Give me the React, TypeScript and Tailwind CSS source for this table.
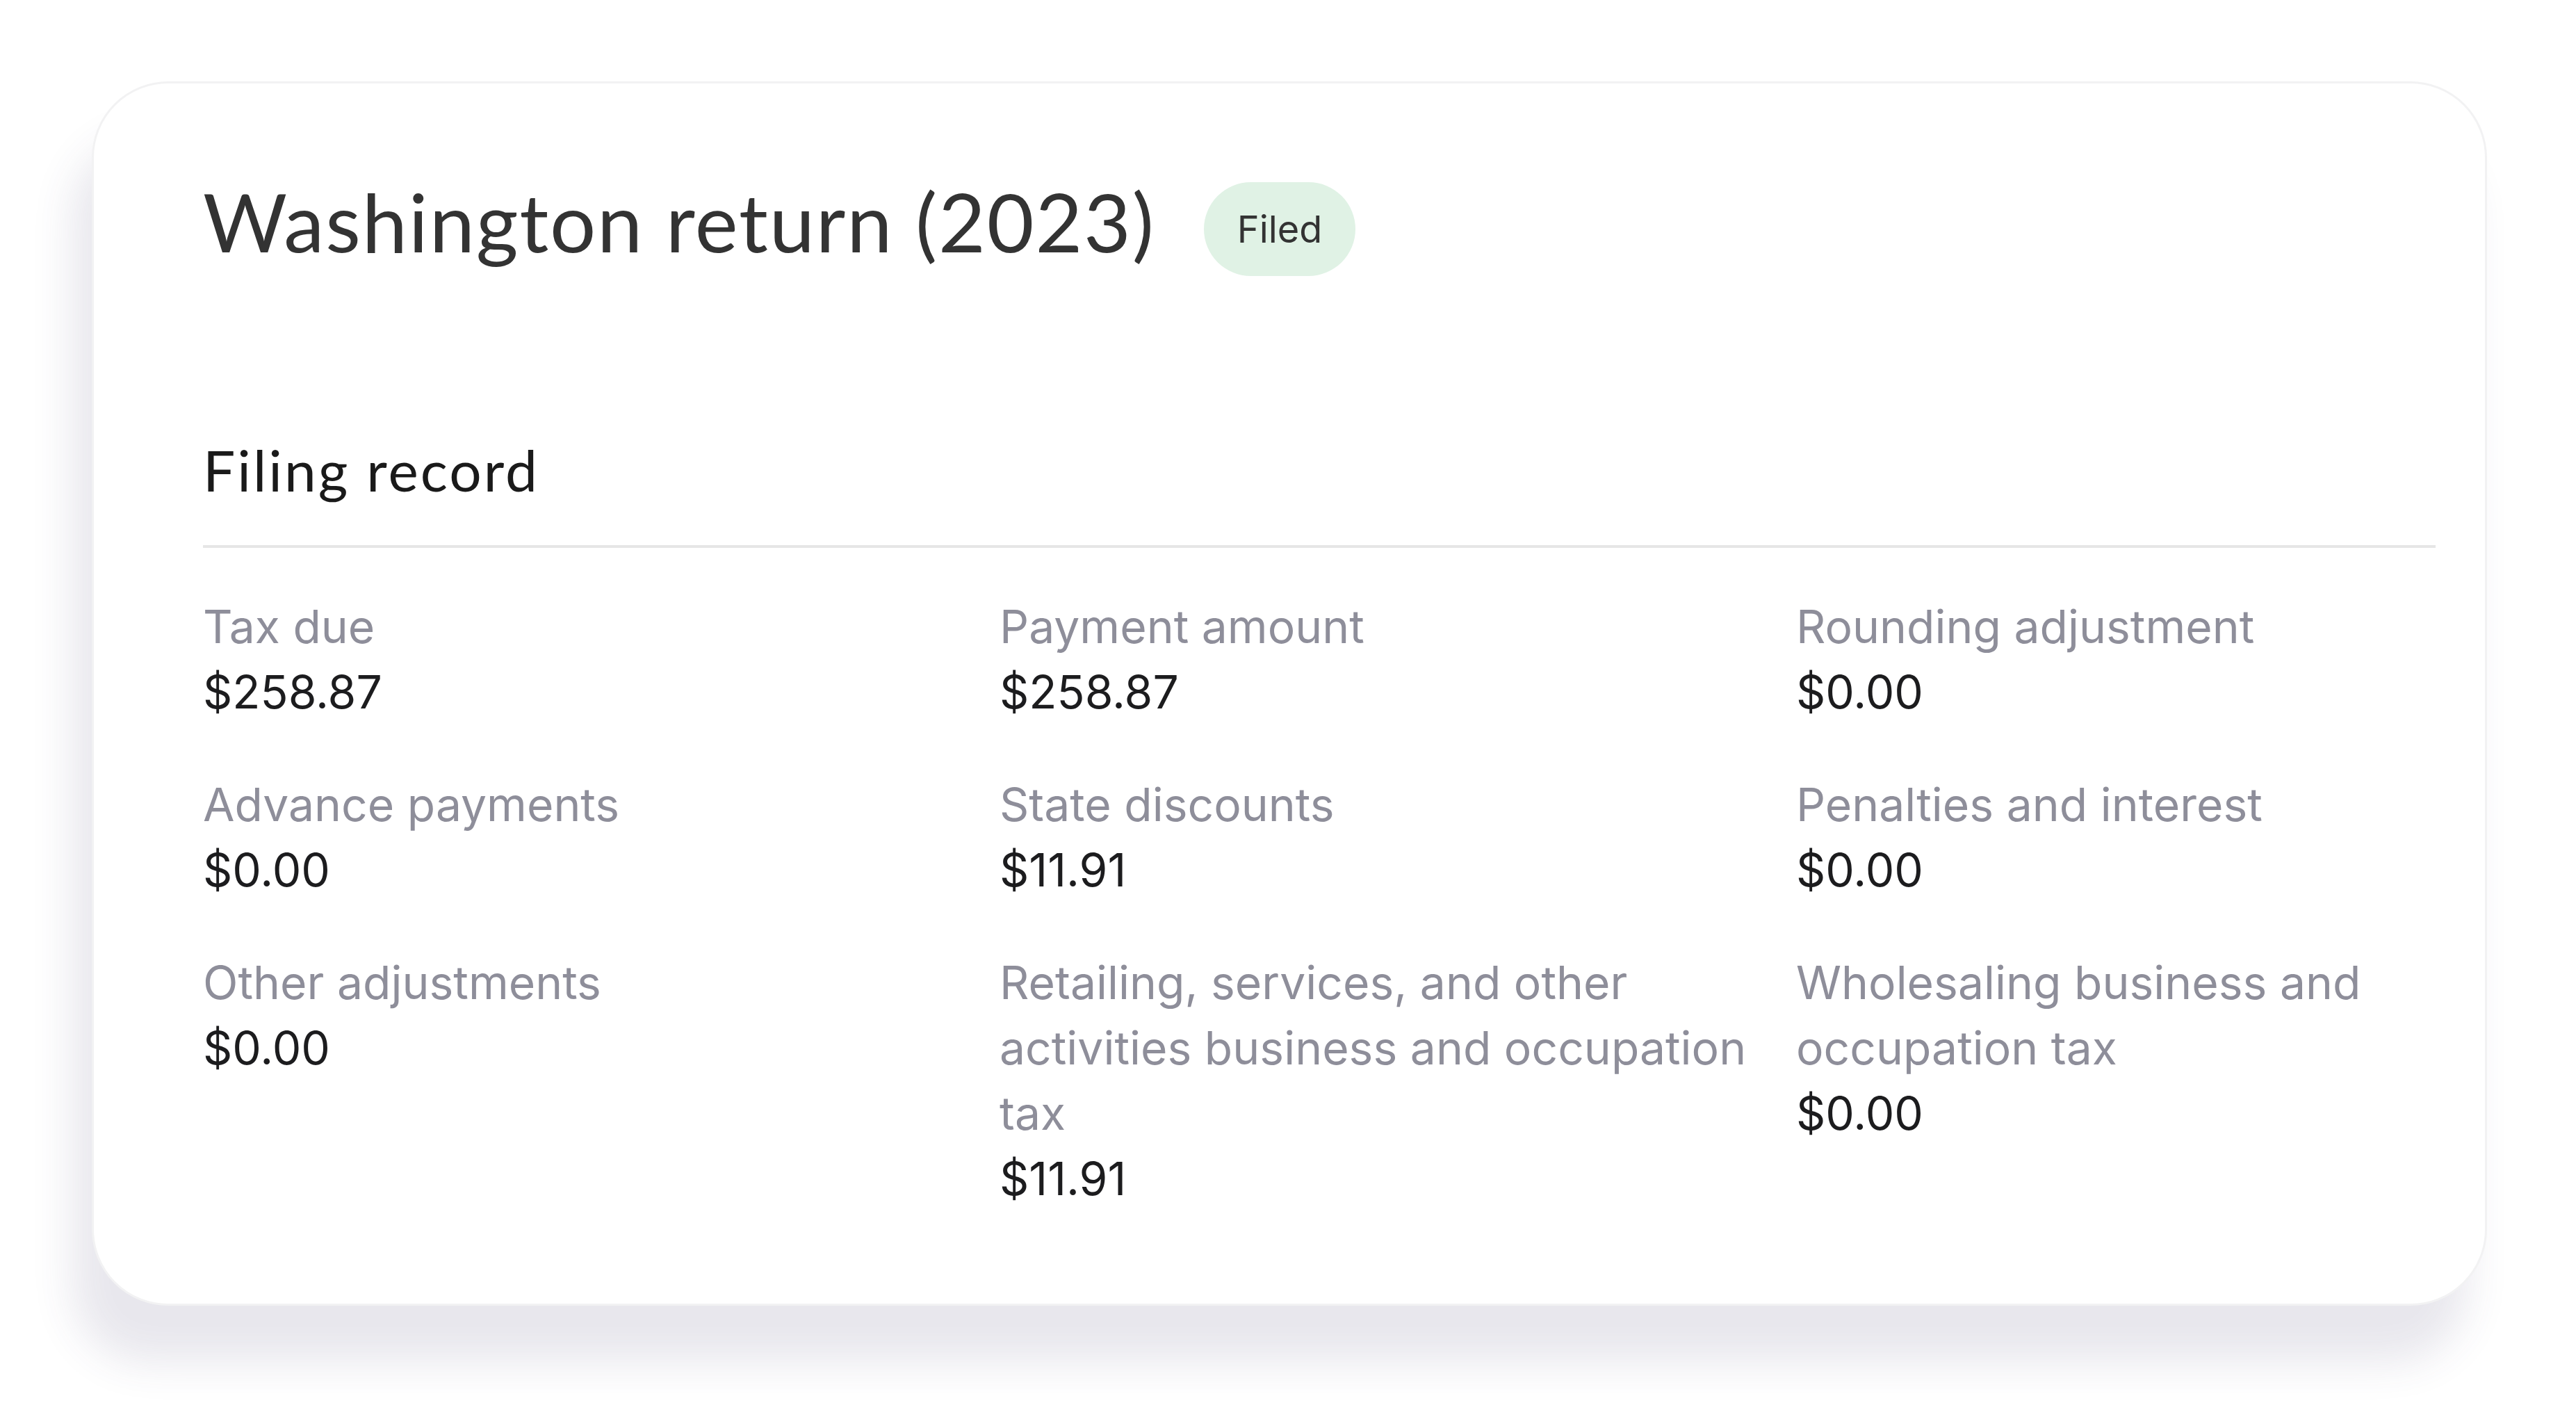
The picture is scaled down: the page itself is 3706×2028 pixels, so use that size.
import React from "react";

const items: { label: string; value: string }[] = [
  { label: "Tax due", value: "$258.87" },
  { label: "Payment amount", value: "$258.87" },
  { label: "Rounding adjustment", value: "$0.00" },
  { label: "Advance payments", value: "$0.00" },
  { label: "State discounts", value: "$11.91" },
  { label: "Penalties and interest", value: "$0.00" },
  { label: "Other adjustments", value: "$0.00" },
  { label: "Retailing, services, and other activities business and occupation tax", value: "$11.91" },
  { label: "Wholesaling business and occupation tax", value: "$0.00" },
];

export default function App() {
  return (
    <div className="min-h-[2028px] w-[3706px] bg-white pt-[117px] pl-[132px]">
      <div className="w-[3446px] h-[1761px] rounded-[110px] border-[3px] border-[#f2f2f3] bg-white pl-[157px] pr-[71px] pt-[131px] shadow-[-28px_82px_60px_0px_rgba(63,60,105,0.12)]">
        <div className="flex items-start">
          <h1
            className="text-[117px] leading-[135px] tracking-[1.8px] text-[#333333] whitespace-nowrap"
            style={{ fontFamily: "Lato, 'Noto Sans', sans-serif" }}
          >
            Washington return (2023)
          </h1>
          <div className="ml-[70px] mt-[11px] flex h-[135px] items-center rounded-full bg-[#e0f2e5] px-[48px]">
            <span
              className="text-[54px] leading-none text-[#333333]"
              style={{ fontFamily: "Inter, 'Liberation Sans', sans-serif" }}
            >
              Filed
            </span>
          </div>
        </div>

        <h2
          className="mt-[228px] text-[82px] leading-[100px] tracking-[3px] text-[#1a1a1a]"
          style={{ fontFamily: "Lato, 'Noto Sans', sans-serif" }}
        >
          Filing record
        </h2>

        <div className="mt-[59px] h-[4px] bg-[#e6e6e6]" />

        <div
          className="mt-[66px] grid grid-cols-[1146px_1146px_1fr] gap-y-[68px] text-[66px] leading-[94px]"
          style={{ fontFamily: "Inter, 'Liberation Sans', sans-serif" }}
        >
          {items.map((it) => (
            <div key={it.label} className="flex flex-col">
              <span className="text-[#8e8e9a]">{it.label}</span>
              <span className="text-[#1c1c1e]">{it.value}</span>
            </div>
          ))}
        </div>
      </div>
    </div>
  );
}
